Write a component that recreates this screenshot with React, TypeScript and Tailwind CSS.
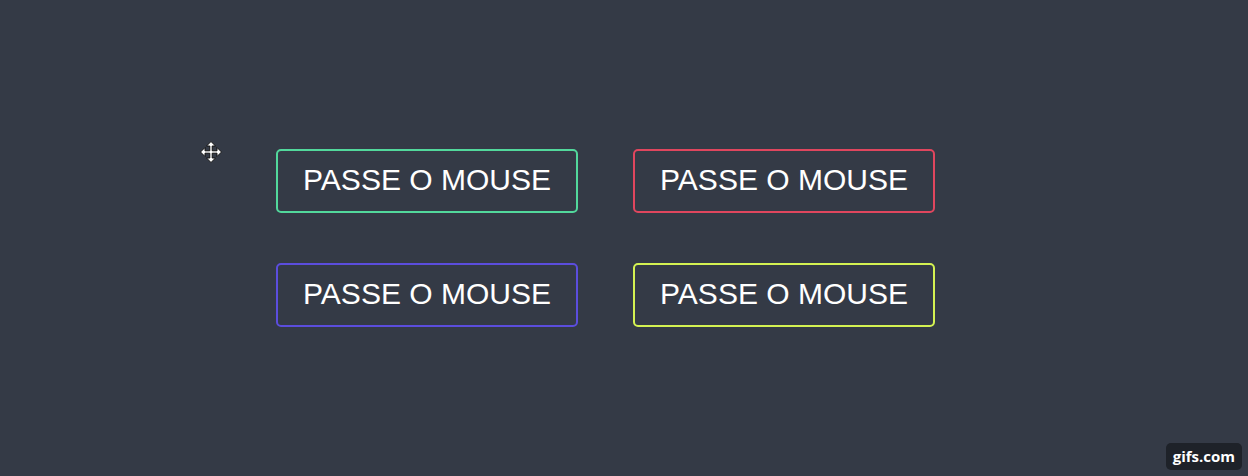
const buttons = [
  { label: "PASSE O MOUSE", border: "border-[#52d89c]" },
  { label: "PASSE O MOUSE", border: "border-[#e0465e]" },
  { label: "PASSE O MOUSE", border: "border-[#5b4ddd]" },
  { label: "PASSE O MOUSE", border: "border-[#d4f252]" },
];

function MoveCursor() {
  return (
    <svg
      width="24"
      height="24"
      viewBox="0 0 24 24"
      className="absolute left-[199px] top-[140px]"
    >
      <path
        d="M12 1.5 L16.5 6 L13.2 6 L13.2 10.8 L18 10.8 L18 7.5 L22.5 12 L18 16.5 L18 13.2 L13.2 13.2 L13.2 18 L16.5 18 L12 22.5 L7.5 18 L10.8 18 L10.8 13.2 L6 13.2 L6 16.5 L1.5 12 L6 7.5 L6 10.8 L10.8 10.8 L10.8 6 L7.5 6 Z"
        fill="#ffffff"
        stroke="#111111"
        strokeWidth="1"
      />
    </svg>
  );
}

export default function App() {
  return (
    <main className="relative h-[476px] w-[1248px] overflow-hidden bg-[#343a46] font-['Liberation_Sans',Arial,sans-serif]">
      <MoveCursor />

      <div className="grid w-max grid-cols-2 gap-x-[55px] gap-y-[50px] pl-[276px] pt-[149px]">
        {buttons.map((button, index) => (
          <button
            key={index}
            className={`flex h-[64px] w-[302px] items-center justify-center rounded-[5px] border-2 ${button.border} bg-transparent pb-[2px] text-[30px] leading-none text-white`}
          >
            {button.label}
          </button>
        ))}
      </div>

      <div className="absolute bottom-[6px] right-[6px] flex h-[27px] items-center rounded-[5px] bg-[#1e2229] px-[7px] text-[15px] font-bold text-white font-['Open_Sans',sans-serif]">
        gifs.com
      </div>
    </main>
  );
}
